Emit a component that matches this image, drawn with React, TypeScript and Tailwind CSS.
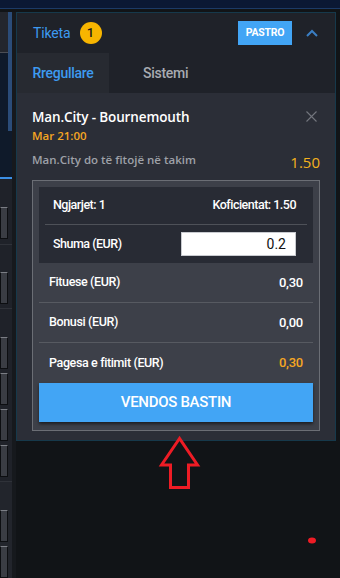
import React from "react";

const font = { fontFamily: "Roboto, 'Liberation Sans', sans-serif" };

function SideBox() {
  return (
    <div className="w-[8px] h-[32px] bg-[#3a3d44] border border-[#0c0e11] border-t-[#7b7e85]" />
  );
}

function LeftColumn() {
  return (
    <div className="relative w-3 flex flex-col">
      <div className="h-[41px] bg-[#23262d] border-b border-[#4b4e55]" />
      <div className="h-[126px] bg-[#0f1a2a] border-b-2 border-[#3b8fe5]" />
      <div className="h-[66px] bg-[#1f2229] border-b border-[#2f3239] pt-[28px]">
        <SideBox />
      </div>
      <div className="h-[64px] bg-[#1f2229] border-b border-[#2f3239] pt-[27px]">
        <SideBox />
      </div>
      <div className="h-[173px] bg-[#1f2229] border-b border-[#2f3239] pt-[28px] flex flex-col gap-[4px]">
        <SideBox />
        <SideBox />
        <SideBox />
        <SideBox />
      </div>
      <div className="flex-1 bg-[#22252c] pt-[28px] flex flex-col gap-[4px]">
        <SideBox />
        <SideBox />
      </div>
      {/* scrollbar thumb */}
      <div className="absolute left-[8px] top-0 w-[4px] h-[119px] bg-[#2b4c78]" />
    </div>
  );
}

function Row({
  label,
  value,
  accent,
  last,
}: {
  label: string;
  value: string;
  accent?: boolean;
  last?: boolean;
}) {
  return (
    <div
      className={`h-[40px] flex items-center justify-between pl-[10px] pr-[10px] ${
        last ? "" : "border-b border-[#575a61]"
      }`}
    >
      <span className="text-[12.5px] font-medium tracking-[-0.03em] text-white">
        {label}
      </span>
      <span
        className={`text-[13px] font-medium tracking-[-0.02em] ${
          accent ? "text-[#f5a623]" : "text-white"
        }`}
      >
        {value}
      </span>
    </div>
  );
}

function BetSlip() {
  return (
    <div className="w-[320px] self-start border border-[#16394b] bg-[#2b2e37]">
      {/* header */}
      <div className="h-[40px] bg-[#1f2229] flex items-center pl-4 pr-[17px]">
        <span className="text-[14px] text-[#3d9af0] tracking-[-0.01em]">Tiketa</span>
        <span className="ml-[9px] w-[22px] h-[22px] rounded-full bg-[#f7b500] text-[#1b1b1b] text-[13px] font-medium flex items-center justify-center">
          1
        </span>
        <button className="ml-auto w-[54px] h-[24px] bg-[#42a5f5] text-white text-[10.5px] font-bold tracking-[-0.02em] flex items-center justify-center">
          PASTRO
        </button>
        <svg
          className="ml-[14px]"
          width="12"
          height="8"
          viewBox="0 0 12 8"
          fill="none"
          stroke="#3b7fc4"
          strokeWidth="2"
        >
          <path d="M1 7 L6 2 L11 7" />
        </svg>
      </div>

      {/* tabs */}
      <div className="h-[40px] bg-[#1f2229] flex">
        <div className="w-[92px] bg-[#272a31] flex items-center justify-center text-[14px] font-medium text-[#3d9af0] tracking-[-0.02em]">
          Rregullare
        </div>
        <div className="flex items-center pl-[34px] text-[14px] font-medium text-[#a8abb1] tracking-[-0.02em]">
          Sistemi
        </div>
      </div>

      {/* selection */}
      <div className="px-[15px] pt-[15px] pb-[9px]">
        <div className="flex items-start justify-between pr-[3px]">
          <div className="flex flex-col">
            <span
              className="text-[13.5px] leading-[18px] font-semibold text-white"
              style={{ fontFamily: "'Open Sans', sans-serif", letterSpacing: "-0.01em" }}
            >
              Man.City - Bournemouth
            </span>
            <span
              className="text-[11.5px] leading-[18px] pt-[1px] font-semibold text-[#f5a623]"
              style={{ fontFamily: "'Open Sans', sans-serif" }}
            >
              Mar 21:00
            </span>
          </div>
          <svg
            className="mt-[3px]"
            width="11"
            height="11"
            viewBox="0 0 11 11"
            stroke="#73767e"
            strokeWidth="1.1"
          >
            <path d="M0.5 0.5 L10.5 10.5 M10.5 0.5 L0.5 10.5" />
          </svg>
        </div>
        <div className="mt-[7px] flex items-end justify-between">
          <span
            className="text-[11.5px] leading-[16px] font-semibold text-[#9ea1a8] pb-[3px]"
            style={{ fontFamily: "'Open Sans', sans-serif" }}
          >
            Man.City do të fitojë në takim
          </span>
          <span
            className="text-[15px] leading-[18px] text-[#f5b21e]"
            style={{ fontFamily: "'Open Sans', sans-serif" }}
          >
            1.50
          </span>
        </div>

        {/* stake box */}
        <div className="mt-[9px] border border-[#6b6e75] bg-[#3d4049] px-[6px] pt-[6px] pb-[8px]">
          <div className="bg-[#282b34] px-[6px]">
            <div className="h-[38px] flex items-center justify-between pl-2 pr-[11px] border-b border-[#4e5158]">
              <span className="text-[12.5px] font-medium tracking-[-0.04em] text-white">
                Ngjarjet: 1
              </span>
              <span className="text-[12.5px] font-medium tracking-[-0.04em] text-white">
                Koficientat: 1.50
              </span>
            </div>
            <div className="h-[38px] flex items-center justify-between pl-2 pr-[11px]">
              <span className="text-[12.5px] font-medium tracking-[-0.04em] text-white">
                Shuma (EUR)
              </span>
              <div className="w-[115px] h-[24px] bg-white border border-[#c9cbd0] flex items-center justify-end pr-[9px] text-[14px] text-[#111]">
                0.2
              </div>
            </div>
          </div>
          <Row label="Fituese (EUR)" value="0,30" />
          <Row label="Bonusi (EUR)" value="0,00" />
          <Row label="Pagesa e fitimit (EUR)" value="0,30" accent last />
          <button className="w-full h-[39px] bg-[#42a5f5] shadow-[0_2px_3px_rgba(0,0,0,0.55)] text-white text-[15px] font-medium tracking-[-0.02em] flex items-center justify-center">
            VENDOS BASTIN
          </button>
        </div>
      </div>
    </div>
  );
}

export default function App() {
  return (
    <div
      className="relative w-[340px] h-[578px] overflow-hidden bg-[#111417] flex flex-col"
      style={font}
    >
      <div className="h-[9px] bg-[#0b1834] border-b border-[#1c3a66]" />
      <div className="flex flex-1 pt-[3px]">
        <LeftColumn />
        <div className="w-1 bg-[#16191d]" />
        <BetSlip />
      </div>

      {/* annotation arrow */}
      <svg
        className="absolute left-0 top-0 pointer-events-none"
        width="340"
        height="578"
        viewBox="0 0 340 578"
      >
        <polygon
          points="179.5,438.5 161.5,465 170.5,465 170.5,487.5 188.5,487.5 188.5,465 197.5,465"
          fill="none"
          stroke="#ee1c25"
          strokeWidth="3"
          strokeLinejoin="miter"
        />
        <ellipse cx="312" cy="540.5" rx="4" ry="3" fill="#ee1c25" />
      </svg>
    </div>
  );
}
